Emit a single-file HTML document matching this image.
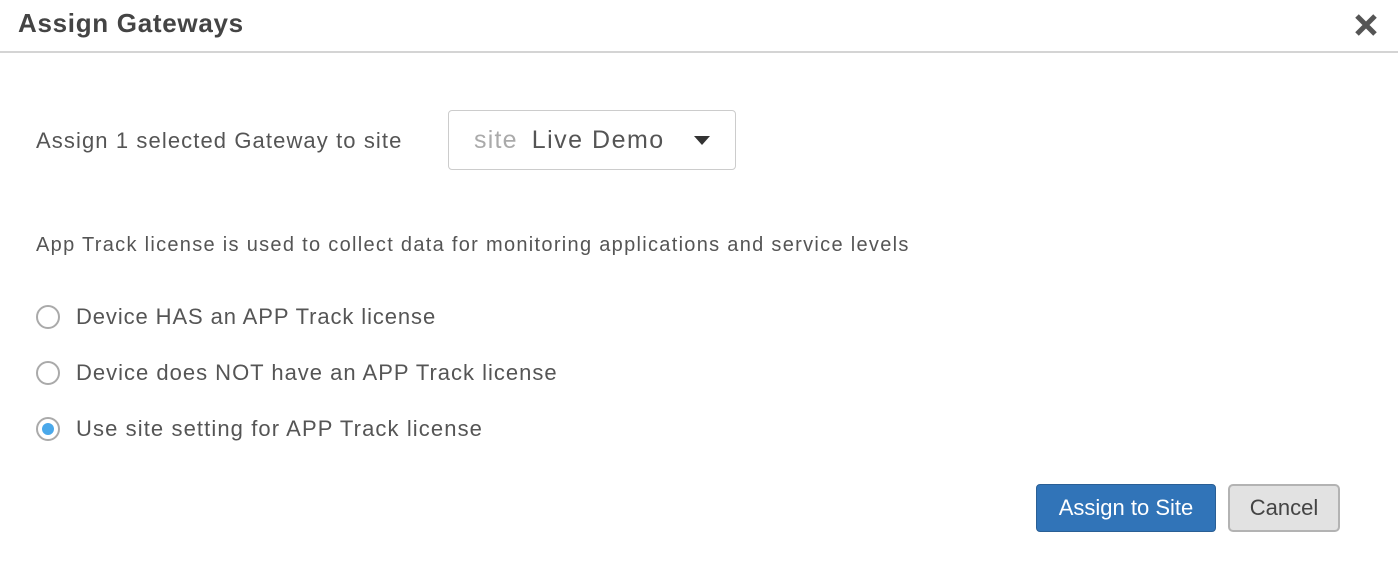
<!DOCTYPE html>
<html><head><style>
body{margin:0;width:1398px;height:588px;background:#fff;font-family:"Liberation Sans",sans-serif;color:#555;position:relative;overflow:hidden}
.a{position:absolute;white-space:nowrap}
.hdr{position:absolute;left:0;top:0;width:1398px;height:51px;border-bottom:2px solid #d4d4d4}
.radio{position:absolute;left:36px;width:24px;height:24px;border:2px solid #aaa;border-radius:50%;box-sizing:border-box;background:#fff}
.radio.on::after{content:"";position:absolute;left:4px;top:4px;width:12px;height:12px;border-radius:50%;background:#4aa8ea}
</style></head><body>
<div class="hdr"></div>
<div class="a" style="left:18px;top:8px;font-size:26px;font-weight:bold;color:#444;letter-spacing:0.7px">Assign Gateways</div>
<svg class="a" style="left:1354px;top:13px" width="24" height="24" viewBox="0 0 24 24"><path d="M3 3L21 21M21 3L3 21" stroke="#555" stroke-width="5"/></svg>
<div class="a" style="left:36px;top:128px;font-size:22px;letter-spacing:1.1px">Assign 1 selected Gateway to site</div>
<div class="a" style="left:448px;top:110px;width:288px;height:60px;border:1px solid #ccc;border-radius:4px;box-sizing:border-box"></div>
<div class="a" style="left:474px;top:126px;font-size:25px;color:#aaa;letter-spacing:1.2px">site<span style="color:#555;margin-left:14px;letter-spacing:1.5px">Live Demo</span></div>
<svg class="a" style="left:694px;top:136px" width="16" height="10"><path d="M0 0H16L8 9Z" fill="#333"/></svg>
<div class="a" style="left:36px;top:234px;font-size:20px;letter-spacing:1.3px">App Track license is used to collect data for monitoring applications and service levels</div>
<div class="radio" style="top:305px"></div>
<div class="a" style="left:76px;top:304px;font-size:22px;letter-spacing:0.9px">Device HAS an APP Track license</div>
<div class="radio" style="top:361px"></div>
<div class="a" style="left:76px;top:360px;font-size:22px;letter-spacing:1px">Device does NOT have an APP Track license</div>
<div class="radio on" style="top:417px"></div>
<div class="a" style="left:76px;top:416px;font-size:22px;letter-spacing:1.1px">Use site setting for APP Track license</div>
<div class="a" style="left:1036px;top:484px;width:180px;height:48px;background:#3174b8;border:1px solid #2a5f95;border-radius:4px;box-sizing:border-box;color:#fff;font-size:22px;text-align:center;line-height:46px">Assign to Site</div>
<div class="a" style="left:1228px;top:484px;width:112px;height:48px;background:#e2e2e2;border:2px solid #b3b3b3;border-radius:5px;box-sizing:border-box;color:#444;font-size:22px;text-align:center;line-height:44px">Cancel</div>
</body></html>
